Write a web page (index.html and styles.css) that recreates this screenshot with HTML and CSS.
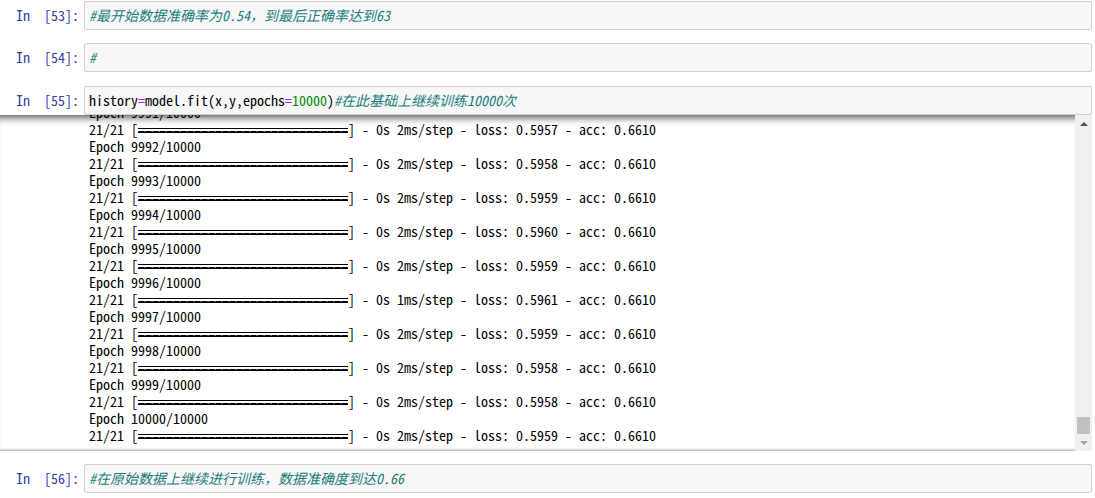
FILE: index.html
```html
<!DOCTYPE html>
<html lang="zh">
<head>
<meta charset="utf-8">
<title>Notebook</title>
<link rel="stylesheet" href="styles.css">
</head>
<body>
<div class="notebook">
  <div class="cell">
    <div class="prompt">In&nbsp;&nbsp;[53]:</div>
    <div class="input-area"><span class="comment">#最开始数据准确率为0.54，到最后正确率达到63</span></div>
  </div>
  <div class="cell">
    <div class="prompt">In&nbsp;&nbsp;[54]:</div>
    <div class="input-area"><span class="comment">#</span></div>
  </div>
  <div class="cell cell-with-output">
    <div class="input-row">
      <div class="prompt">In&nbsp;&nbsp;[55]:</div>
      <div class="input-area">history<span class="op">=</span>model.fit(x,y,epochs<span class="op">=</span><span class="num">10000</span>)<span class="comment">#在此基础上继续训练10000次</span></div>
    </div>
    <div class="output-scroll">
      <div class="output-view">
        <div class="output-text">
          <div class="line">Epoch 9991/10000</div>
          <div class="line">21/21 [<span class="bar">==============================</span>] - 0s 2ms/step - loss: 0.5957 - acc: 0.6610</div>
          <div class="line">Epoch 9992/10000</div>
          <div class="line">21/21 [<span class="bar">==============================</span>] - 0s 2ms/step - loss: 0.5958 - acc: 0.6610</div>
          <div class="line">Epoch 9993/10000</div>
          <div class="line">21/21 [<span class="bar">==============================</span>] - 0s 2ms/step - loss: 0.5959 - acc: 0.6610</div>
          <div class="line">Epoch 9994/10000</div>
          <div class="line">21/21 [<span class="bar">==============================</span>] - 0s 2ms/step - loss: 0.5960 - acc: 0.6610</div>
          <div class="line">Epoch 9995/10000</div>
          <div class="line">21/21 [<span class="bar">==============================</span>] - 0s 2ms/step - loss: 0.5959 - acc: 0.6610</div>
          <div class="line">Epoch 9996/10000</div>
          <div class="line">21/21 [<span class="bar">==============================</span>] - 0s 1ms/step - loss: 0.5961 - acc: 0.6610</div>
          <div class="line">Epoch 9997/10000</div>
          <div class="line">21/21 [<span class="bar">==============================</span>] - 0s 2ms/step - loss: 0.5959 - acc: 0.6610</div>
          <div class="line">Epoch 9998/10000</div>
          <div class="line">21/21 [<span class="bar">==============================</span>] - 0s 2ms/step - loss: 0.5958 - acc: 0.6610</div>
          <div class="line">Epoch 9999/10000</div>
          <div class="line">21/21 [<span class="bar">==============================</span>] - 0s 2ms/step - loss: 0.5958 - acc: 0.6610</div>
          <div class="line">Epoch 10000/10000</div>
          <div class="line">21/21 [<span class="bar">==============================</span>] - 0s 2ms/step - loss: 0.5959 - acc: 0.6610</div>
        </div>
      </div>
      <div class="scrollbar">
        <div class="sb-btn"><span class="arrow-up"></span></div>
        <div class="sb-track"><div class="sb-thumb"></div></div>
        <div class="sb-btn"><span class="arrow-down"></span></div>
      </div>
    </div>
  </div>
  <div class="cell">
    <div class="prompt">In&nbsp;&nbsp;[56]:</div>
    <div class="input-area"><span class="comment">#在原始数据上继续进行训练，数据准确度到达0.66</span></div>
  </div>
</div>
</body>
</html>
```

FILE: styles.css
```css
html, body {
  margin: 0;
  padding: 0;
  background: #fff;
}

body {
  font-family: "Noto Sans Mono CJK SC", "Noto Sans CJK SC", "Liberation Mono", monospace;
  font-size: 14px;
  line-height: 17px;
  color: #000;
}

.notebook {
  display: flex;
  flex-direction: column;
  gap: 13px;
  padding: 1px 3px 0 0;
}

.cell,
.input-row {
  display: flex;
  align-items: flex-start;
}

.cell-with-output {
  flex-direction: column;
  align-items: stretch;
  margin-top: 1px;
}

.prompt {
  width: 79px;
  padding: 6px 5px 0 0;
  text-align: right;
  color: #303f9f;
  white-space: nowrap;
  flex: none;
}

.input-area {
  flex: 1;
  background: #f7f7f7;
  border: 1px solid #cfcfcf;
  border-radius: 2px;
  padding: 5px 4px;
  white-space: pre;
  overflow: hidden;
}

.comment {
  color: #1a7c7c;
  font-style: italic;
}

.op {
  color: #aa22ff;
}

.num {
  color: #008800;
}

.output-scroll {
  display: flex;
  height: 336px;
}

.output-view {
  flex: 1;
  overflow: hidden;
  display: flex;
  flex-direction: column;
  justify-content: flex-end;
  box-shadow: inset 0 10px 8px -8px rgba(0, 0, 0, 0.75), inset 0 -3px 3px -2px rgba(0, 0, 0, 0.35);
  padding: 0 0 7px 89px;
}

.output-text {
  flex: none;
}

.line {
  white-space: pre;
  height: 17px;
}

.bar {
  display: inline-block;
  vertical-align: top;
  height: 17px;
  background:
    linear-gradient(#000, #000) 0 7px / 100% 1px no-repeat,
    linear-gradient(#000, #000) 0 11px / 100% 1px no-repeat;
}

.scrollbar {
  width: 17px;
  flex: none;
  background: #f0f0f0;
  display: flex;
  flex-direction: column;
}

.sb-btn {
  height: 17px;
  display: flex;
  align-items: center;
  justify-content: center;
  flex: none;
}

.arrow-up {
  width: 0;
  height: 0;
  border-left: 4px solid transparent;
  border-right: 4px solid transparent;
  border-bottom: 4px solid #505050;
}

.arrow-down {
  width: 0;
  height: 0;
  border-left: 4px solid transparent;
  border-right: 4px solid transparent;
  border-top: 4px solid #a3a3a3;
}

.sb-track {
  flex: 1;
  display: flex;
  flex-direction: column;
  justify-content: flex-end;
  align-items: center;
}

.sb-thumb {
  width: 13px;
  height: 17px;
  background: #c1c1c1;
}
```
